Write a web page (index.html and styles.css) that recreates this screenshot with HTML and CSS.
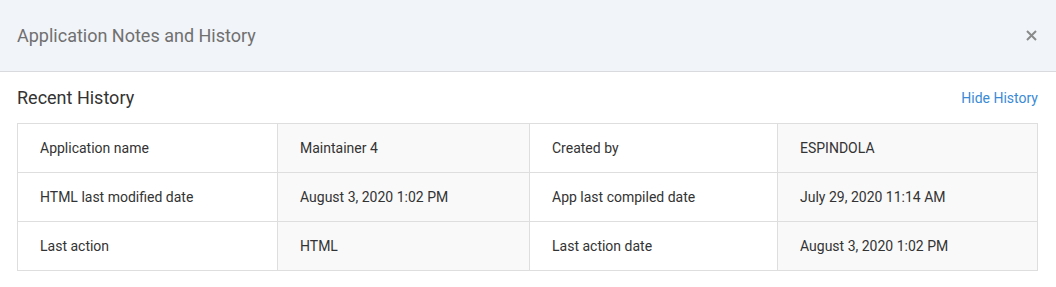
FILE: index.html
```html
<!DOCTYPE html>
<html lang="en">
<head>
    <meta charset="UTF-8">
    <title>Application Notes and History</title>
    <link rel="stylesheet" href="styles.css">
</head>
<body>
<div class="dialog">
    <div class="dialog-header">
        <h1 class="dialog-title">Application Notes and History</h1>
        <button class="dialog-close" type="button" aria-label="Close">
            <svg width="11" height="11" viewBox="0 0 11 11">
                <path d="M1 1L10 10M10 1L1 10" stroke="#8a8a8a" stroke-width="2"/>
            </svg>
        </button>
    </div>
    <div class="dialog-body">
        <div class="section-head">
            <h2 class="section-title">Recent History</h2>
            <a class="section-link" href="#">Hide History</a>
        </div>
        <table class="history">
            <colgroup>
                <col class="col-1">
                <col class="col-2">
                <col class="col-3">
                <col class="col-4">
            </colgroup>
            <tbody>
            <tr>
                <td>Application name</td>
                <td class="value">Maintainer 4</td>
                <td>Created by</td>
                <td class="value">ESPINDOLA</td>
            </tr>
            <tr>
                <td>HTML last modified date</td>
                <td class="value">August 3, 2020 1:02 PM</td>
                <td>App last compiled date</td>
                <td class="value">July 29, 2020 11:14 AM</td>
            </tr>
            <tr>
                <td>Last action</td>
                <td class="value">HTML</td>
                <td>Last action date</td>
                <td class="value">August 3, 2020 1:02 PM</td>
            </tr>
            </tbody>
        </table>
    </div>
</div>
</body>
</html>
```

FILE: styles.css
```css
body {
    margin: 0;
    font-family: Roboto, "Liberation Sans", sans-serif;
    background-color: #fff;
    color: #333;
}

.dialog-header {
    height: 71px;
    display: flex;
    align-items: center;
    justify-content: space-between;
    padding: 0 17px;
    background-color: #f1f4f8;
    border-bottom: 1px solid #d8dadd;
}

.dialog-title {
    margin: 0;
    font-size: 18px;
    font-weight: 400;
    color: #707070;
}

.dialog-close {
    border: 0;
    background: none;
    padding: 0;
    margin-right: 2px;
    display: flex;
    cursor: pointer;
}

.dialog-body {
    padding: 0 18px 0 17px;
}

.section-head {
    height: 51px;
    display: flex;
    align-items: center;
    justify-content: space-between;
}

.section-title {
    margin: 0;
    font-size: 18px;
    font-weight: 400;
    color: #333;
}

.section-link {
    font-size: 14px;
    color: #3a8ad6;
    text-decoration: none;
}

.history {
    width: 100%;
    border-collapse: collapse;
    table-layout: fixed;
    font-size: 14px;
}

.col-1 { width: 260px; }
.col-2 { width: 252px; }
.col-3 { width: 248px; }

.history td {
    height: 48px;
    padding: 0 22px;
    border: 1px solid #dedede;
    color: #333;
}

.history td.value {
    background-color: #f9f9f9;
}
```
